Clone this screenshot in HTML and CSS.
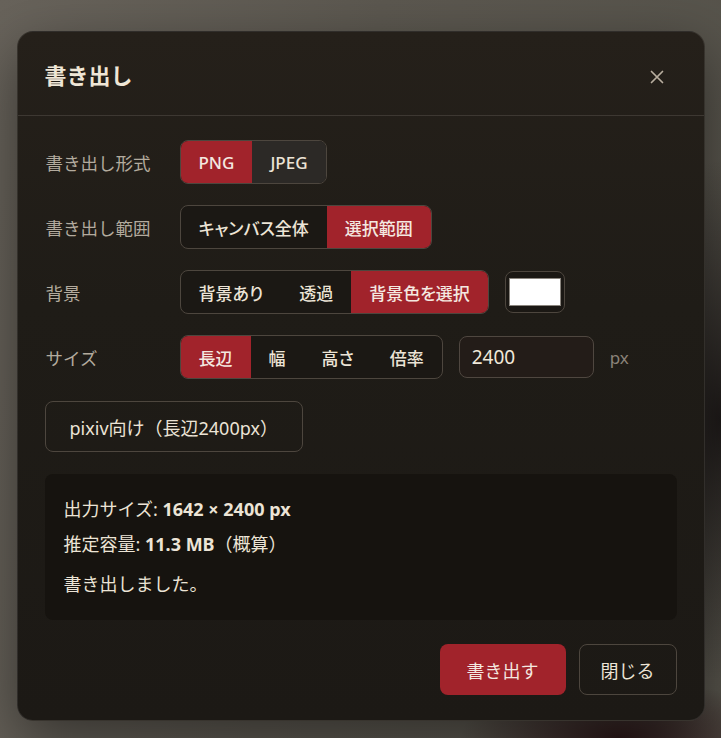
FILE: index.html
```html
<!DOCTYPE html>
<html lang="ja">
<head>
  <meta charset="UTF-8">
  <title>書き出し</title>
  <link rel="stylesheet" href="styles.css">
</head>
<body>
  <div class="modal">
    <div class="modal-header">
      <h2>書き出し</h2>
      <button class="cerrar" aria-label="閉じる">
        <svg width="14" height="14" viewBox="0 0 14 14"><path d="M1.5 1.5 L12.5 12.5 M12.5 1.5 L1.5 12.5" stroke="currentColor" stroke-width="1.7" stroke-linecap="round"/></svg>
      </button>
    </div>

    <div class="modal-body">
      <div class="campo">
        <span class="etiqueta">書き出し形式</span>
        <div class="controles">
          <div class="segmento">
            <button class="activo">PNG</button>
            <button class="hover">JPEG</button>
          </div>
        </div>
      </div>

      <div class="campo">
        <span class="etiqueta">書き出し範囲</span>
        <div class="controles">
          <div class="segmento">
            <button>キャンバス全体</button>
            <button class="activo">選択範囲</button>
          </div>
        </div>
      </div>

      <div class="campo">
        <span class="etiqueta">背景</span>
        <div class="controles">
          <div class="segmento">
            <button>背景あり</button>
            <button>透過</button>
            <button class="activo">背景色を選択</button>
          </div>
          <div class="muestra"><span></span></div>
        </div>
      </div>

      <div class="campo">
        <span class="etiqueta">サイズ</span>
        <div class="controles">
          <div class="segmento">
            <button class="activo">長辺</button>
            <button>幅</button>
            <button>高さ</button>
            <button>倍率</button>
          </div>
          <input class="numero" value="2400">
          <span class="unidad">px</span>
        </div>
      </div>

      <button class="preset">pixiv向け（長辺2400px）</button>

      <div class="info">
        <p>出力サイズ: <strong>1642 × 2400 px</strong></p>
        <p>推定容量: <strong>11.3 MB</strong>（概算）</p>
        <p class="estado">書き出しました。</p>
      </div>
    </div>

    <div class="modal-footer">
      <button class="exportar">書き出す</button>
      <button class="secundario">閉じる</button>
    </div>
  </div>
</body>
</html>
```

FILE: styles.css
```css
* {
  box-sizing: border-box;
}

body {
  margin: 0;
  height: 738px;
  overflow: hidden;
  font-family: 'Noto Sans', 'Noto Sans CJK JP', sans-serif;
  color: #ece4d6;
  display: flex;
  justify-content: center;
  align-items: flex-start;
  padding-top: 31px;
  background:
    radial-gradient(ellipse 120px 260px at 720px 420px, rgba(20, 16, 16, 0.85), rgba(20, 16, 16, 0) 100%),
    radial-gradient(ellipse 160px 60px at 620px 738px, rgba(40, 18, 20, 0.9), rgba(40, 18, 20, 0) 100%),
    linear-gradient(100deg, #68635b 0%, #5c5850 45%, #55524a 100%);
}

button {
  font-family: inherit;
  color: inherit;
  background: none;
  border: none;
  cursor: pointer;
  padding: 0;
}

.modal {
  width: 688px;
  background: linear-gradient(180deg, #25201a 0%, #1f1c17 40%, #1c1915 100%);
  border: 1px solid rgba(255, 255, 255, 0.09);
  border-radius: 16px;
  box-shadow: 0 20px 60px rgba(0, 0, 0, 0.45);
}

.modal-header {
  display: flex;
  justify-content: space-between;
  align-items: center;
  height: 84px;
  padding: 2px 27px 0 27px;
  border-bottom: 1px solid #3d3832;
}

.modal-header h2 {
  margin: 0;
  font-size: 22px;
  line-height: 28px;
  font-weight: 700;
  color: #efe6d6;
}

.cerrar {
  width: 40px;
  height: 28px;
  display: flex;
  align-items: center;
  justify-content: center;
  color: #b8ae9f;
  margin-top: 4px;
}

.modal-body {
  padding: 24px 27px 0 27px;
  display: flex;
  flex-direction: column;
}

.campo {
  display: grid;
  grid-template-columns: 135px auto;
  align-items: center;
  margin-bottom: 21px;
}

.etiqueta {
  font-size: 17.5px;
  color: #b3ab9e;
  padding-left: 1px;
}

.controles {
  display: flex;
  align-items: center;
  gap: 16px;
}

.segmento {
  display: inline-flex;
  border: 1px solid #4d463e;
  border-radius: 8px;
  overflow: hidden;
  background: #1b1814;
}

.segmento button {
  height: 42px;
  padding: 0 18px;
  font-size: 17px;
  font-weight: 500;
  font-feature-settings: "palt";
  color: #ece4d6;
}

.segmento button.activo {
  background: #a1232b;
  color: #f4e8e0;
}

.segmento button.hover {
  background: #2c2926;
}

.muestra {
  width: 60px;
  height: 42px;
  border: 1px solid #4d463e;
  border-radius: 8px;
  background: #1b1814;
  display: flex;
  align-items: center;
  justify-content: center;
}

.muestra span {
  width: 52px;
  height: 28px;
  background: #fff;
  border: 1px solid #8a857e;
}

.numero {
  width: 135px;
  height: 42px;
  background: #231c18;
  border: 1px solid #4f4740;
  border-radius: 8px;
  color: #f0e8da;
  font-family: inherit;
  font-size: 19px;
  padding: 0 12px;
  outline: none;
}

.unidad {
  font-size: 17px;
  color: #8a8278;
}

.preset {
  align-self: flex-start;
  height: 51px;
  padding: 0 24px;
  border: 1px solid #4d463e;
  border-radius: 8px;
  font-size: 18px;
  margin-top: 1px;
  margin-bottom: 22px;
  color: #ece4d6;
}

.info {
  background: #16130f;
  border-radius: 8px;
  padding: 18px 19px 18px 19px;
}

.info p {
  margin: 0;
  font-size: 18px;
  line-height: 35px;
  color: #ece4d6;
}

.info strong {
  font-weight: 700;
}

.info .estado {
  margin-top: 5px;
}

.modal-footer {
  display: flex;
  justify-content: flex-end;
  gap: 13px;
  padding: 24px 27px 25px 27px;
}

.modal-footer button {
  height: 51px;
  border-radius: 8px;
  font-size: 18px;
}

.exportar {
  background: #a1232b;
  padding: 0 27px;
  color: #f4e8e0;
}

.secundario {
  border: 1px solid #4d463e;
  padding: 0 21px;
}
```
